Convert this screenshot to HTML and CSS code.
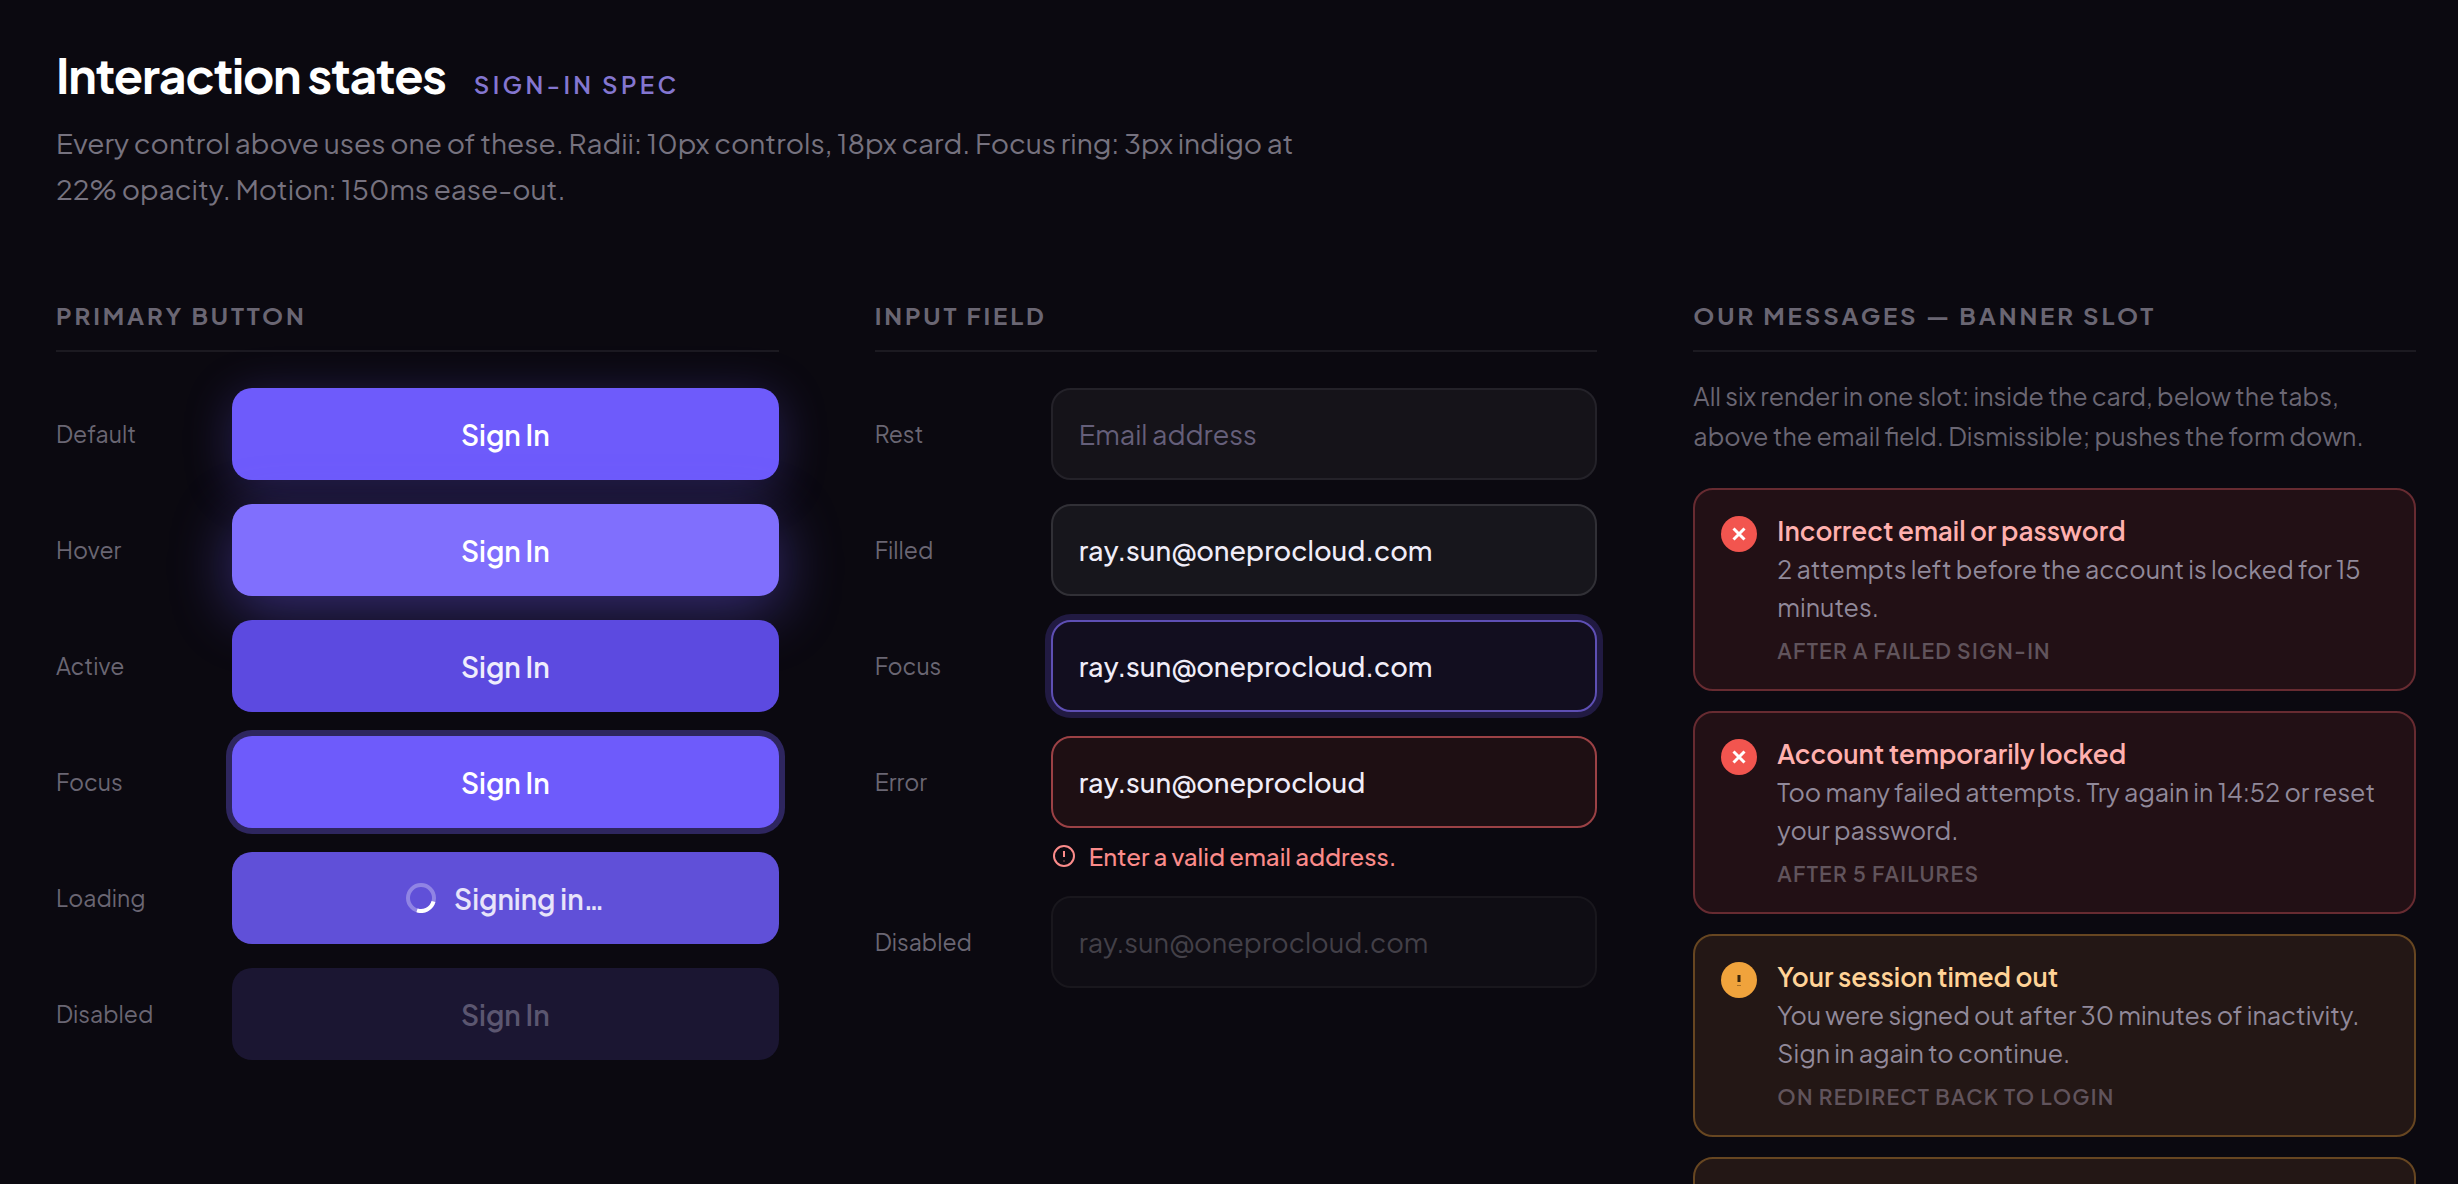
FILE: index.html
```
<!DOCTYPE html>
<html lang="en">
<head>
	<meta charset="utf-8">
	<meta name="viewport" content="width=device-width, initial-scale=1">
	<title>Interaction states</title>
	<link rel="stylesheet" href="styles.css">
</head>
<body>
	<main class="spec">
		<header class="spec-header">
			<div class="title-row">
				<h1>Interaction states</h1>
				<span class="spec-tag">Sign-in spec</span>
			</div>
			<p class="intro">Every control above uses one of these. Radii: 10px controls, 18px card. Focus ring: 3px indigo at 22% opacity. Motion: 150ms ease-out.</p>
		</header>

		<div class="columns">
			<!-- primary button -->
			<section>
				<h2>Primary button</h2>
				<div class="states">
					<div class="state">
						<span class="state-name">Default</span>
						<button type="button" class="btn btn-default">Sign In</button>
					</div>
					<div class="state">
						<span class="state-name">Hover</span>
						<button type="button" class="btn btn-hover">Sign In</button>
					</div>
					<div class="state">
						<span class="state-name">Active</span>
						<button type="button" class="btn btn-active">Sign In</button>
					</div>
					<div class="state">
						<span class="state-name">Focus</span>
						<button type="button" class="btn btn-focus">Sign In</button>
					</div>
					<div class="state">
						<span class="state-name">Loading</span>
						<button type="button" class="btn btn-loading">
							<svg class="spinner" viewBox="0 0 30 30" aria-hidden="true">
								<circle cx="15" cy="15" r="13"/>
								<path d="M27.5 18.5A13 13 0 0 1 11 27.4"/>
							</svg>
							Signing in…
						</button>
					</div>
					<div class="state">
						<span class="state-name">Disabled</span>
						<button type="button" class="btn btn-disabled" disabled>Sign In</button>
					</div>
				</div>
			</section>

			<!-- input field -->
			<section>
				<h2>Input field</h2>
				<div class="states">
					<div class="state">
						<label class="state-name" for="input-rest">Rest</label>
						<input type="email" id="input-rest" class="field" placeholder="Email address">
					</div>
					<div class="state">
						<label class="state-name" for="input-filled">Filled</label>
						<input type="email" id="input-filled" class="field field-filled" value="ray.sun@oneprocloud.com">
					</div>
					<div class="state">
						<label class="state-name" for="input-focus">Focus</label>
						<input type="email" id="input-focus" class="field field-focus" value="ray.sun@oneprocloud.com">
					</div>
					<div class="state">
						<label class="state-name" for="input-error">Error</label>
						<input type="email" id="input-error" class="field field-error" value="ray.sun@oneprocloud" aria-describedby="error-hint">
						<p class="hint" id="error-hint">
							<svg class="hint-icon" viewBox="0 0 24 24" aria-hidden="true">
								<circle cx="13" cy="12" r="10"/>
								<path d="M13 7v6"/>
								<path class="dot" d="M12 17h2"/>
							</svg>
							Enter a valid email address.
						</p>
					</div>
					<div class="state">
						<label class="state-name" for="input-disabled">Disabled</label>
						<input type="email" id="input-disabled" class="field field-disabled" value="ray.sun@oneprocloud.com" disabled>
					</div>
				</div>
			</section>

			<!-- banners -->
			<section>
				<h2>Our messages — banner slot</h2>
				<p class="note">All six render in one slot: inside the card, below the tabs, above the email field. Dismissible; pushes the form down.</p>
				<div class="banners">
					<article class="banner banner-error">
						<svg class="banner-icon" viewBox="0 0 36 36" aria-hidden="true">
							<circle cx="18" cy="18" r="18"/>
							<path d="M12.5 12.5l11 11M23.5 12.5l-11 11"/>
						</svg>
						<div>
							<h3>Incorrect email or password</h3>
							<p class="banner-text">2 attempts left before the account is locked for 15 minutes.</p>
							<p class="banner-when">After a failed sign-in</p>
						</div>
					</article>
					<article class="banner banner-error">
						<svg class="banner-icon" viewBox="0 0 36 36" aria-hidden="true">
							<circle cx="18" cy="18" r="18"/>
							<path d="M12.5 12.5l11 11M23.5 12.5l-11 11"/>
						</svg>
						<div>
							<h3>Account temporarily locked</h3>
							<p class="banner-text">Too many failed attempts. Try again in 14:52 or reset your password.</p>
							<p class="banner-when">After 5 failures</p>
						</div>
					</article>
					<article class="banner banner-warning">
						<svg class="banner-icon" viewBox="0 0 36 36" aria-hidden="true">
							<circle cx="18" cy="18" r="18"/>
							<path d="M18 13v7"/>
							<path class="dot" d="M16 23.5h4"/>
						</svg>
						<div>
							<h3>Your session timed out</h3>
							<p class="banner-text">You were signed out after 30 minutes of inactivity. Sign in again to continue.</p>
							<p class="banner-when">On redirect back to login</p>
						</div>
					</article>
					<article class="banner banner-warning"></article>
				</div>
			</section>
		</div>
	</main>
</body>
</html>
```
FILE: styles.css
```
* {
	box-sizing: border-box;
	margin: 0;
	padding: 0;
}
body {
	height: 100vh;
	overflow: hidden;
	background-color: #0b0910;
	color: #fff;
	font-family: "Plus Jakarta Sans", Inter, "Open Sans", sans-serif;
}
.spec {
	padding: 42px 42px 56px 56px;
}

/* header */
.title-row {
	display: flex;
	align-items: baseline;
	gap: 28px;
}
h1 {
	font-size: 48px;
	line-height: 66px;
	font-weight: 700;
	letter-spacing: -0.025em;
}
.spec-tag {
	color: #8476d0;
	font-size: 24px;
	font-weight: 600;
	letter-spacing: 0.14em;
	text-transform: uppercase;
}
.intro {
	max-width: 1280px;
	margin-top: 12px;
	color: #76727f;
	font-size: 28px;
	line-height: 46px;
}

/* columns */
.columns {
	display: grid;
	grid-template-columns: repeat(3, minmax(0, 1fr));
	column-gap: 96px;
	margin-top: 86px;
}
h2 {
	padding-bottom: 18px;
	border-bottom: 2px solid #1c1a21;
	color: #6a6673;
	font-size: 24px;
	line-height: 34px;
	font-weight: 700;
	letter-spacing: 0.12em;
	text-transform: uppercase;
}
.states {
	display: grid;
	row-gap: 24px;
	margin-top: 36px;
}
.state {
	display: grid;
	grid-template-columns: 152px minmax(0, 1fr);
	column-gap: 24px;
	align-items: center;
}
.state-name {
	color: #6a6673;
	font-size: 23px;
	line-height: 32px;
}

/* buttons */
.btn {
	display: flex;
	align-items: center;
	justify-content: center;
	gap: 18px;
	height: 92px;
	border: none;
	border-radius: 20px;
	background-color: #6e5bfb;
	color: #fff;
	font-family: inherit;
	font-size: 28px;
	font-weight: 600;
}
.btn-default {
	box-shadow: 0 8px 48px rgba(110, 91, 251, 0.28);
}
.btn-hover {
	background-color: #806ffd;
	box-shadow: 0 16px 60px rgba(110, 91, 251, 0.42);
}
.btn-active {
	background-color: #5c4ae0;
	color: #efedfc;
}
.btn-focus {
	box-shadow: 0 0 0 6px #2e265f;
}
.btn-loading {
	background-color: #6050d8;
	color: #e7e4fa;
}
.btn-disabled {
	background-color: #1b1632;
	color: #5b5670;
}
.spinner {
	width: 30px;
	height: 30px;
	fill: none;
	stroke-width: 4;
}
.spinner circle {
	stroke: #9084e4;
}
.spinner path {
	stroke: #fff;
}

/* inputs */
.field {
	width: 100%;
	height: 92px;
	padding: 0 26px;
	border: 2px solid #242229;
	border-radius: 20px;
	outline: none;
	background-color: #151319;
	color: #f0edf8;
	font-family: inherit;
	font-size: 27px;
	font-weight: 500;
}
.field::placeholder {
	color: #655f7a;
	font-weight: 400;
	opacity: 1;
}
.field-filled {
	border-color: #313036;
	background-color: #17161c;
}
.field-focus {
	border-color: #5e4fb4;
	background-color: #120e1f;
	box-shadow: 0 0 0 6px #211a42;
}
.field-error {
	border-color: #9b4145;
	background-color: #1e0f13;
}
.field-disabled {
	border-color: #19171d;
	background-color: #0f0d14;
	color: #434048;
	font-weight: 400;
}
.hint {
	grid-column: 2;
	display: flex;
	align-items: center;
	gap: 14px;
	margin-top: 12px;
	color: #fb8b8a;
	font-size: 24px;
	line-height: 32px;
	font-weight: 500;
}
.hint-icon {
	width: 24px;
	height: 24px;
	fill: none;
	stroke: #fb8b8a;
	stroke-width: 2;
}
.hint-icon .dot {
	stroke: #8d5053;
	stroke-width: 1;
}

/* banners */
.note {
	margin-top: 24px;
	color: #6a6673;
	font-size: 25px;
	line-height: 40px;
}
.banners {
	display: grid;
	row-gap: 20px;
	margin-top: 32px;
}
.banner {
	display: flex;
	align-items: flex-start;
	gap: 20px;
	min-height: 203px;
	padding: 22px 26px;
	border: 2px solid;
	border-radius: 20px;
}
.banner-error {
	border-color: #672b31;
	background-color: #221015;
}
.banner-warning {
	border-color: #674621;
	background-color: #231715;
}
.banner-icon {
	flex: none;
	width: 36px;
	height: 36px;
	margin-top: 4px;
	stroke-width: 3;
}
.banner-error .banner-icon {
	fill: #f2554f;
}
.banner-error .banner-icon path {
	stroke: #fff;
}
.banner-warning .banner-icon {
	fill: #f0a33c;
}
.banner-warning .banner-icon path {
	stroke: #38240c;
}
.banner-warning .banner-icon .dot {
	stroke: #a87026;
	stroke-width: 1;
}
h3 {
	font-size: 26px;
	line-height: 38px;
	font-weight: 600;
}
.banner-error h3 {
	color: #ffb0ae;
}
.banner-warning h3 {
	color: #ffd397;
}
.banner-text {
	color: #91899a;
	font-size: 25px;
	line-height: 38px;
}
.banner-when {
	margin-top: 10px;
	color: #61545c;
	font-size: 21px;
	line-height: 30px;
	font-weight: 600;
	letter-spacing: 0.06em;
	text-transform: uppercase;
}
```
